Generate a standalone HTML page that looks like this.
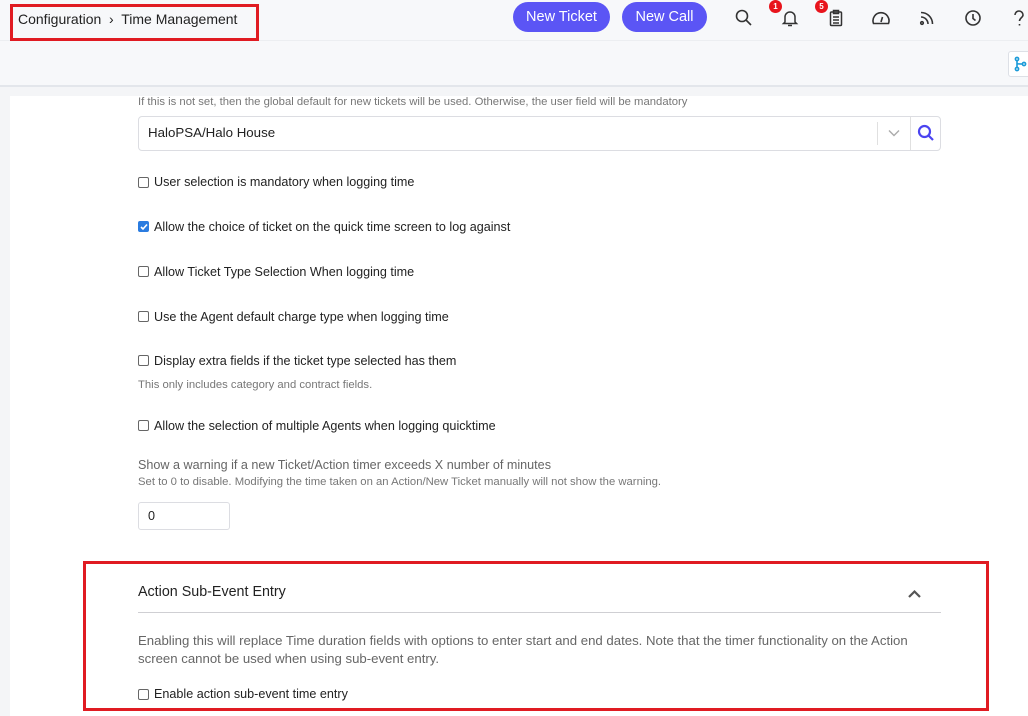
<!DOCTYPE html>
<html><head><meta charset="utf-8"><style>
*{margin:0;padding:0;box-sizing:border-box}
body{width:1028px;height:716px;overflow:hidden;background:#f4f5f7;font-family:"Liberation Sans",sans-serif;color:#222;position:relative}
.a{position:absolute;white-space:nowrap}
.top{position:absolute;left:0;top:0;width:1028px;height:41px;background:#f7f8fa;border-bottom:1px solid #eceef1}
.sub{position:absolute;left:0;top:41px;width:1028px;height:46px;background:#f7f8fa;border-bottom:2px solid #e3e6eb}
.btn{position:absolute;top:2px;height:30px;border-radius:15px;background:#5b55f5;color:#fff;font-size:14.5px;line-height:30px;text-align:center}
.badge{position:absolute;width:13px;height:13px;border-radius:50%;background:#e8141c;color:#fff;font-size:8px;line-height:13px;text-align:center;font-weight:bold}
.panel{position:absolute;left:10px;top:96px;width:1018px;height:620px;background:#fff}
.cb{position:absolute;width:11px;height:11px;border:1px solid #666;border-radius:2px;background:#fff}
.lbl{font-size:12.6px;color:#222}
.hint{font-size:11.3px;color:#777}
</style></head><body>
<div class="top"></div>
<div class="sub"></div>
<div class="a" style="left:18px;top:11px;font-size:14px;color:#222">Configuration &nbsp;›&nbsp; Time Management</div>
<div class="a" style="left:10px;top:4px;width:249px;height:37px;border:3px solid #e01b22"></div>
<div class="btn" style="left:513px;width:97px">New Ticket</div>
<div class="btn" style="left:622px;width:85px">New Call</div>
<svg class="a" style="left:734px;top:8px" width="20" height="20" viewBox="0 0 20 20" fill="none" stroke="#333" stroke-width="1.6"><circle cx="8" cy="8" r="5.5"/><path d="M12 12l5 5"/></svg>
<svg class="a" style="left:780px;top:8px" width="20" height="20" viewBox="0 0 20 20" fill="none" stroke="#333" stroke-width="1.5"><path d="M5 14V9a5 5 0 0110 0v5l1.5 1.5h-13zM8 17.5h4"/></svg>
<div class="badge" style="left:769px;top:0">1</div>
<svg class="a" style="left:826px;top:8px" width="20" height="20" viewBox="0 0 20 20" fill="none" stroke="#333" stroke-width="1.5"><rect x="4.5" y="4" width="11" height="13.5" rx="1"/><rect x="7.5" y="2.5" width="5" height="3"/><path d="M7 9h6M7 12h6M7 15h6"/></svg>
<div class="badge" style="left:815px;top:0">5</div>
<svg class="a" style="left:871px;top:8px" width="20" height="20" viewBox="0 0 20 20" fill="none" stroke="#333" stroke-width="1.6"><path d="M2.5 15.5a8 8 0 1115 0z"/><path d="M10 14l1.5-5"/></svg>
<svg class="a" style="left:917px;top:8px" width="20" height="20" viewBox="0 0 20 20" fill="none" stroke="#333" stroke-width="1.6"><circle cx="5" cy="15" r="1.3"/><path d="M4 9a7 7 0 017 7M4 4.5a11.5 11.5 0 0111.5 11.5"/></svg>
<svg class="a" style="left:963px;top:8px" width="20" height="20" viewBox="0 0 20 20" fill="none" stroke="#333" stroke-width="1.6"><circle cx="10" cy="10" r="7"/><path d="M10 6v4.5l2.5 2"/></svg>
<svg class="a" style="left:1010px;top:8px" width="18" height="20" viewBox="0 0 18 20" fill="none" stroke="#333" stroke-width="1.6"><path d="M5 7a4 4 0 118 0c0 2.5-3.5 3-3.5 6M9.5 16v1.5"/></svg>
<div class="a" style="left:1008px;top:51px;width:24px;height:26px;background:#fff;border:1px solid #dde0e6;border-radius:3px"></div>
<svg class="a" style="left:1013px;top:56px" width="14" height="16" viewBox="0 0 14 16" fill="none" stroke="#1a9ad8" stroke-width="1.6"><circle cx="4" cy="3" r="1.6"/><circle cx="4" cy="13" r="1.6"/><circle cx="11" cy="8" r="1.6"/><path d="M4 4.6v6.8M4 7c0 1 2 1 5.4 1"/></svg>

<div class="panel"></div>
<div class="a hint" style="left:138px;top:96px">If this is not set, then the global default for new tickets will be used. Otherwise, the user field will be mandatory</div>
<div class="a" style="left:138px;top:116px;width:803px;height:35px;border:1px solid #dcdde2;border-radius:4px;background:#fff"></div>
<div class="a lbl" style="left:148px;top:125px;font-size:13.3px">HaloPSA/Halo House</div>
<div class="a" style="left:877px;top:122px;width:1px;height:23px;background:#e0e0e0"></div>
<svg class="a" style="left:888px;top:129px" width="12" height="8" viewBox="0 0 12 8" fill="none" stroke="#aaa" stroke-width="1.4"><path d="M1 1.5l5 5 5-5"/></svg>
<div class="a" style="left:910px;top:117px;width:1px;height:33px;background:#e0e0e0"></div>
<svg class="a" style="left:916px;top:123px" width="20" height="20" viewBox="0 0 20 20" fill="none" stroke="#4b44f0" stroke-width="2.2"><circle cx="8.5" cy="8.5" r="5.5"/><path d="M12.5 12.5l4.5 4.5"/></svg>

<div class="cb" style="left:138px;top:177px"></div><div class="a lbl" style="left:154px;top:175px">User selection is mandatory when logging time</div>
<div class="cb" style="left:138px;top:221px;background:#2a7ce0;border-color:#2a7ce0"></div>
<svg class="a" style="left:139px;top:222px" width="10" height="10" viewBox="0 0 10 10" fill="none" stroke="#fff" stroke-width="1.6"><path d="M2 5l2 2 4-4.5"/></svg>
<div class="a lbl" style="left:154px;top:220px">Allow the choice of ticket on the quick time screen to log against</div>
<div class="cb" style="left:138px;top:266px"></div><div class="a lbl" style="left:154px;top:265px">Allow Ticket Type Selection When logging time</div>
<div class="cb" style="left:138px;top:311px"></div><div class="a lbl" style="left:154px;top:310px">Use the Agent default charge type when logging time</div>
<div class="cb" style="left:138px;top:355px"></div><div class="a lbl" style="left:154px;top:354px">Display extra fields if the ticket type selected has them</div>
<div class="a hint" style="left:138px;top:379px">This only includes category and contract fields.</div>
<div class="cb" style="left:138px;top:420px"></div><div class="a lbl" style="left:154px;top:419px">Allow the selection of multiple Agents when logging quicktime</div>
<div class="a" style="left:138px;top:458px;font-size:12.6px;color:#666">Show a warning if a new Ticket/Action timer exceeds X number of minutes</div>
<div class="a hint" style="left:138px;top:476px">Set to 0 to disable. Modifying the time taken on an Action/New Ticket manually will not show the warning.</div>
<div class="a" style="left:138px;top:502px;width:92px;height:28px;border:1px solid #dcdde2;border-radius:3px"></div>
<div class="a lbl" style="left:148px;top:509px">0</div>

<div class="a" style="left:83px;top:561px;width:906px;height:150px;border:3px solid #e01b22"></div>
<div class="a" style="left:138px;top:584px;font-size:14.3px;color:#222">Action Sub-Event Entry</div>
<svg class="a" style="left:907px;top:589px" width="15" height="10" viewBox="0 0 15 10" fill="none" stroke="#555" stroke-width="2.2"><path d="M2 8l5.5-5.5L13 8"/></svg>
<div class="a" style="left:138px;top:612px;width:803px;height:1px;background:#cfcfd3"></div>
<div class="a" style="left:138px;top:632px;font-size:13.2px;color:#666;line-height:18px">Enabling this will replace Time duration fields with options to enter start and end dates. Note that the timer functionality on the Action<br>screen cannot be used when using sub-event entry.</div>
<div class="cb" style="left:138px;top:689px"></div><div class="a lbl" style="left:154px;top:687px">Enable action sub-event time entry</div>
</body></html>
